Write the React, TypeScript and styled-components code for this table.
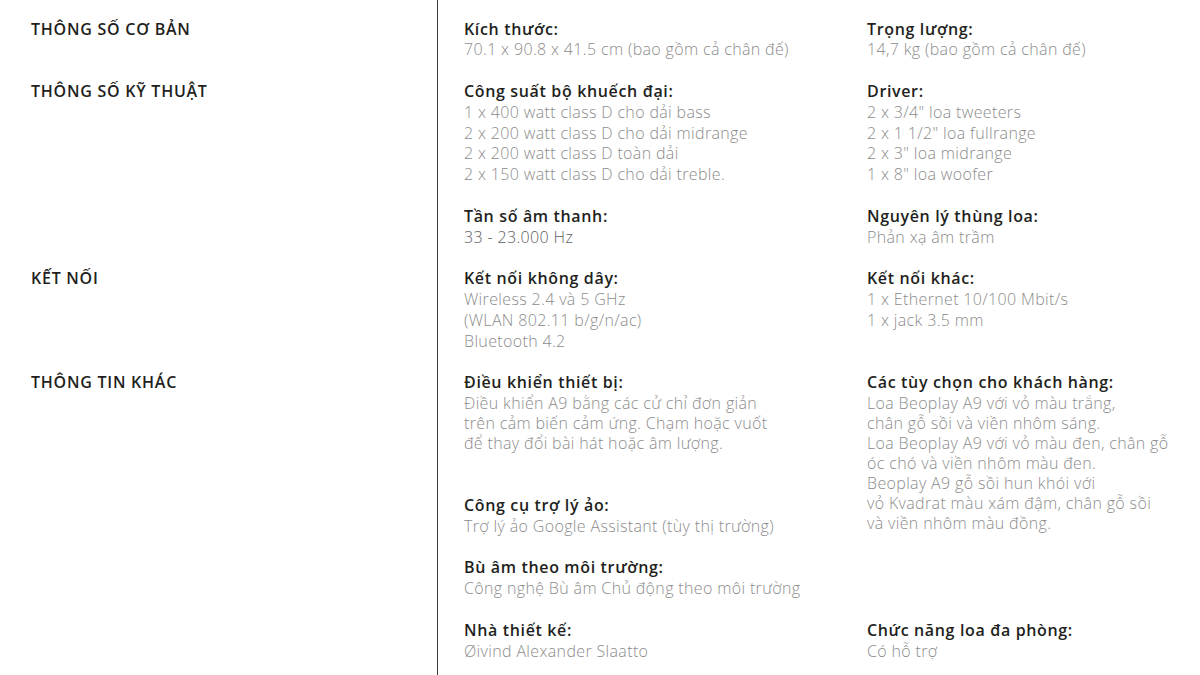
import React from "react";
import styled, { createGlobalStyle } from "styled-components";

const LINE = 20.8;

const Global = createGlobalStyle`
  html, body { margin: 0; padding: 0; background: #fff; }
  body { font-family: "Open Sans", "Noto Sans", sans-serif; }
  * { box-sizing: border-box; }
`;

const Page = styled.div`
  display: flex;
  flex-direction: column;
  min-height: 100vh;
  width: 1200px;
`;

const Section = styled.section<{ $grow?: boolean }>`
  display: grid;
  grid-template-columns: 438px 1fr;
  flex: ${(p) => (p.$grow ? "1 1 auto" : "none")};
`;

const Label = styled.div<{ $first?: boolean }>`
  border-right: 1px solid #3a3a3a;
  padding: ${(p) => (p.$first ? "18.6px" : "0")} 0 ${LINE}px 31px;
  font-size: 16px;
  line-height: ${LINE}px;
  font-weight: 600;
  letter-spacing: 0.75px;
  color: #231f20;
  text-transform: uppercase;
`;

const Specs = styled.div<{ $first?: boolean }>`
  display: grid;
  grid-template-columns: 403px 1fr;
  row-gap: ${LINE}px;
  padding: ${(p) => (p.$first ? "18.6px" : "0")} 0 ${LINE}px 26px;
  align-content: start;
`;

const Stack = styled.div`
  display: flex;
  flex-direction: column;
`;

const Block = styled.div<{ $after?: number }>`
  margin-bottom: ${(p) => p.$after ?? 0}px;
`;

const Title = styled.div`
  font-size: 16px;
  line-height: ${LINE}px;
  font-weight: 600;
  letter-spacing: 0.65px;
  color: #231f20;
  white-space: nowrap;
`;

const Value = styled.div<{ $dark?: boolean }>`
  font-size: 16px;
  line-height: ${LINE}px;
  font-weight: 300;
  letter-spacing: 0.35px;
  color: ${(p) => (p.$dark ? "#5e5e5e" : "#8c8c8c")};
  white-space: nowrap;
`;

const Paragraph = styled.p`
  margin: 0;
  font-size: 16px;
  line-height: 20px;
  font-weight: 300;
  letter-spacing: 0.35px;
  color: #8c8c8c;
  white-space: nowrap;
`;

type SpecProps = {
  title: string;
  lines: string[];
  dark?: boolean;
  tight?: boolean;
  after?: number;
};

const Spec = ({ title, lines, dark, tight, after }: SpecProps) => (
  <Block $after={after}>
    <Title>{title}</Title>
    {tight ? (
      <Paragraph>
        {lines.map((l, i) => (
          <React.Fragment key={i}>
            {i > 0 && <br />}
            {l}
          </React.Fragment>
        ))}
      </Paragraph>
    ) : (
      lines.map((l, i) => (
        <Value key={i} $dark={dark}>
          {l}
        </Value>
      ))
    )}
  </Block>
);

export default function App() {
  return (
    <>
      <Global />
      <Page>
        <Section>
          <Label $first>Thông số cơ bản</Label>
          <Specs $first>
            <Spec title="Kích thước:" lines={["70.1 x 90.8 x 41.5 cm (bao gồm cả chân đế)"]} />
            <Spec title="Trọng lượng:" lines={["14,7 kg (bao gồm cả chân đế)"]} />
          </Specs>
        </Section>

        <Section>
          <Label>Thông số kỹ thuật</Label>
          <Specs>
            <Spec
              title="Công suất bộ khuếch đại:"
              lines={[
                "1 x 400 watt class D cho dải bass",
                "2 x 200 watt class D cho dải midrange",
                "2 x 200 watt class D toàn dải",
                "2 x 150 watt class D cho dải treble.",
              ]}
            />
            <Spec
              title="Driver:"
              lines={[
                "2 x 3/4\" loa tweeters",
                "2 x 1 1/2\" loa fullrange",
                "2 x 3\" loa midrange",
                "1 x 8\" loa woofer",
              ]}
            />
            <Spec title="Tần số âm thanh:" lines={["33 - 23.000 Hz"]} dark />
            <Spec title="Nguyên lý thùng loa:" lines={["Phản xạ âm trầm"]} />
          </Specs>
        </Section>

        <Section>
          <Label>Kết nối</Label>
          <Specs>
            <Spec
              title="Kết nối không dây:"
              lines={["Wireless 2.4 và 5 GHz", "(WLAN 802.11 b/g/n/ac)", "Bluetooth 4.2"]}
            />
            <Spec title="Kết nối khác:" lines={["1 x Ethernet 10/100 Mbit/s", "1 x jack 3.5 mm"]} />
          </Specs>
        </Section>

        <Section $grow>
          <Label>Thông tin khác</Label>
          <Specs>
            <Stack>
              <Spec
                title="Điều khiển thiết bị:"
                tight
                after={42}
                lines={[
                  "Điều khiển A9 bằng các cử chỉ đơn giản",
                  "trên cảm biến cảm ứng. Chạm hoặc vuốt",
                  "để thay đổi bài hát hoặc âm lượng.",
                ]}
              />
              <Spec
                title="Công cụ trợ lý ảo:"
                after={LINE}
                lines={["Trợ lý ảo Google Assistant (tùy thị trường)"]}
              />
              <Spec title="Bù âm theo môi trường:" lines={["Công nghệ Bù âm Chủ động theo môi trường"]} />
            </Stack>
            <Spec
              title="Các tùy chọn cho khách hàng:"
              tight
              lines={[
                "Loa Beoplay A9 với vỏ màu trắng,",
                "chân gỗ sồi và viền nhôm sáng.",
                "Loa Beoplay A9 với vỏ màu đen, chân gỗ",
                "óc chó và viền nhôm màu đen.",
                "Beoplay A9 gỗ sồi hun khói với",
                "vỏ Kvadrat màu xám đậm, chân gỗ sồi",
                "và viền nhôm màu đồng.",
              ]}
            />
            <Spec title="Nhà thiết kế:" lines={["Øivind Alexander Slaatto"]} />
            <Spec title="Chức năng loa đa phòng:" lines={["Có hỗ trợ"]} />
          </Specs>
        </Section>
      </Page>
    </>
  );
}
